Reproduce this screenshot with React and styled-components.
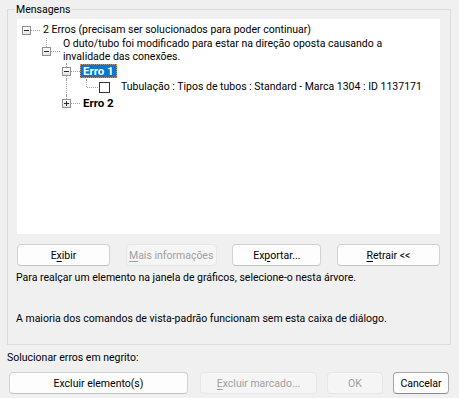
import React from "react";
import styled, { createGlobalStyle } from "styled-components";

const Global = createGlobalStyle`
  html, body { margin: 0; padding: 0; background: #f0f0f0; }
  body { font-family: Roboto, "Noto Sans", sans-serif; font-size: 10.5px; color: #000; }
`;

const Root = styled.div`
  width: 459px;
  height: 398px;
  box-sizing: border-box;
  padding: 3px 0 0 7px;
  display: flex;
  flex-direction: column;
`;

const Group = styled.fieldset`
  margin: 0;
  width: 444px;
  box-sizing: border-box;
  border: 1px solid #dcdcdc;
  padding: 3px 10px 18px 8px;
  display: flex;
  flex-direction: column;
`;

const Legend = styled.legend`
  padding: 0 1px;
  margin-left: -1px;
  line-height: 13px;
`;

const Tree = styled.div`
  margin-left: 1px;
  width: 423px;
  height: 215px;
  background: #fff;
  padding-top: 3px;
  box-sizing: border-box;
`;

const Row = styled.div`
  display: flex;
  align-items: center;
  min-height: 16px;
`;

const Cell = styled.div`
  position: relative;
  flex: 0 0 20px;
  align-self: stretch;
  &::before {
    content: "";
    display: ${(p) => (p.$through || p.$vTop || p.$vBottom ? "block" : "none")};
    position: absolute;
    left: 9px;
    top: ${(p) => (p.$through || p.$vTop ? "0" : "50%")};
    bottom: ${(p) => (p.$through || p.$vBottom ? "0" : "50%")};
    border-left: 1px dotted #a0a0a0;
  }
  &::after {
    content: "";
    display: ${(p) => (p.$h ? "block" : "none")};
    position: absolute;
    left: 10px;
    top: 50%;
    width: ${(p) => p.$hw || 13}px;
    border-top: 1px dotted #a0a0a0;
  }
`;

const Expander = styled.span`
  position: absolute;
  z-index: 1;
  left: 5px;
  top: 50%;
  margin-top: -4px;
  width: 9px;
  height: 9px;
  box-sizing: border-box;
  border: 1px solid #919191;
  background: linear-gradient(#ffffff, #e4e4e4);
  &::before {
    content: "";
    position: absolute;
    left: 1px;
    top: 3px;
    width: 5px;
    height: 1px;
    background: #2b2b2b;
  }
  &::after {
    content: "";
    display: ${(p) => (p.$plus ? "block" : "none")};
    position: absolute;
    left: 3px;
    top: 1px;
    width: 1px;
    height: 5px;
    background: #2b2b2b;
  }
`;

const Label = styled.span`
  margin-left: 3px;
  padding: 0 3px;
  line-height: ${(p) => (p.$multi ? "12.5px" : "14px")};
  font-size: ${(p) => (p.$bold ? "11.5px" : "10.5px")};
  font-weight: ${(p) => (p.$bold ? 700 : 400)};
  white-space: nowrap;
  background: ${(p) => (p.$selected ? "#0078d7" : "transparent")};
  color: ${(p) => (p.$selected ? "#fff" : "#000")};
  outline: ${(p) => (p.$selected ? "1px dotted #ff8728" : "none")};
  outline-offset: -1px;
`;

const StateBox = styled.span`
  display: inline-block;
  margin-left: 2px;
  width: 11px;
  height: 11px;
  box-sizing: border-box;
  border: 1px solid #333;
  background: #fff;
  margin-right: 5px;
`;

const ButtonRow = styled.div`
  margin: 10px 0 0 1px;
  width: 423px;
  display: flex;
  justify-content: space-between;
`;

const Button = styled.button`
  width: ${(p) => p.$w}px;
  height: 22px;
  box-sizing: border-box;
  padding: 0;
  font-family: inherit;
  font-size: 10.5px;
  border-radius: 4px;
  border: 1px solid ${(p) => (p.$default ? "#a8a8a8" : p.disabled ? "#e6e6e6" : "#d3d3d3")};
  border-bottom-color: ${(p) => (p.$default ? "#8c8c8c" : p.disabled ? "#e6e6e6" : "#c2c2c2")};
  background: ${(p) => (p.disabled ? "#f5f5f5" : "#fdfdfd")};
  color: ${(p) => (p.disabled ? "#a0a0a0" : "#000")};
  u { text-decoration-thickness: 1px; text-underline-offset: 2px; }
`;

const Info = styled.div`
  line-height: 14px;
  margin-top: ${(p) => p.$mt}px;
`;

const Caption = styled.div`
  line-height: 14px;
  margin-top: 6px;
`;

const BottomRow = styled.div`
  display: flex;
  gap: 10px;
  margin: 7px 0 0 2px;
  & > button:first-child { margin-right: 2px; }
`;

export default function App() {
  return (
    <>
      <Global />
      <Root>
        <Group>
          <Legend>Mensagens</Legend>
          <Tree>
            <Row>
              <Cell $h><Expander /></Cell>
              <Label>2 Erros (precisam ser solucionados para poder continuar)</Label>
            </Row>
            <Row>
              <Cell />
              <Cell $vTop $h><Expander /></Cell>
              <Label $multi>
                O duto/tubo foi modificado para estar na direção oposta causando a
                <br />
                invalidade das conexões.
              </Label>
            </Row>
            <Row>
              <Cell />
              <Cell />
              <Cell $vTop $vBottom $h><Expander /></Cell>
              <Label $bold $selected>Erro 1</Label>
            </Row>
            <Row>
              <Cell />
              <Cell />
              <Cell $through />
              <Cell $vTop $h $hw={11} />
              <StateBox />
              <Label>Tubulação : Tipos de tubos : Standard - Marca 1304 : ID 1137171</Label>
            </Row>
            <Row>
              <Cell />
              <Cell />
              <Cell $vTop $h><Expander $plus /></Cell>
              <Label $bold>Erro 2</Label>
            </Row>
          </Tree>
          <ButtonRow>
            <Button $w={93}>E<u>x</u>ibir</Button>
            <Button $w={91} disabled><u>M</u>ais informações</Button>
            <Button $w={89}>Ex<u>p</u>ortar...</Button>
            <Button $w={103}><u>R</u>etrair &lt;&lt;</Button>
          </ButtonRow>
          <Info $mt={5}>Para realçar um elemento na janela de gráficos, selecione-o nesta árvore.</Info>
          <Info $mt={27}>A maioria dos comandos de vista-padrão funcionam sem esta caixa de diálogo.</Info>
        </Group>
        <Caption>Solucionar erros em negrito:</Caption>
        <BottomRow>
          <Button $w={179}>Excluir elemento(s)</Button>
          <Button $w={117} disabled><u>E</u>xcluir marcado...</Button>
          <Button $w={56} disabled>OK</Button>
          <Button $w={56} $default>Cancelar</Button>
        </BottomRow>
      </Root>
    </>
  );
}
